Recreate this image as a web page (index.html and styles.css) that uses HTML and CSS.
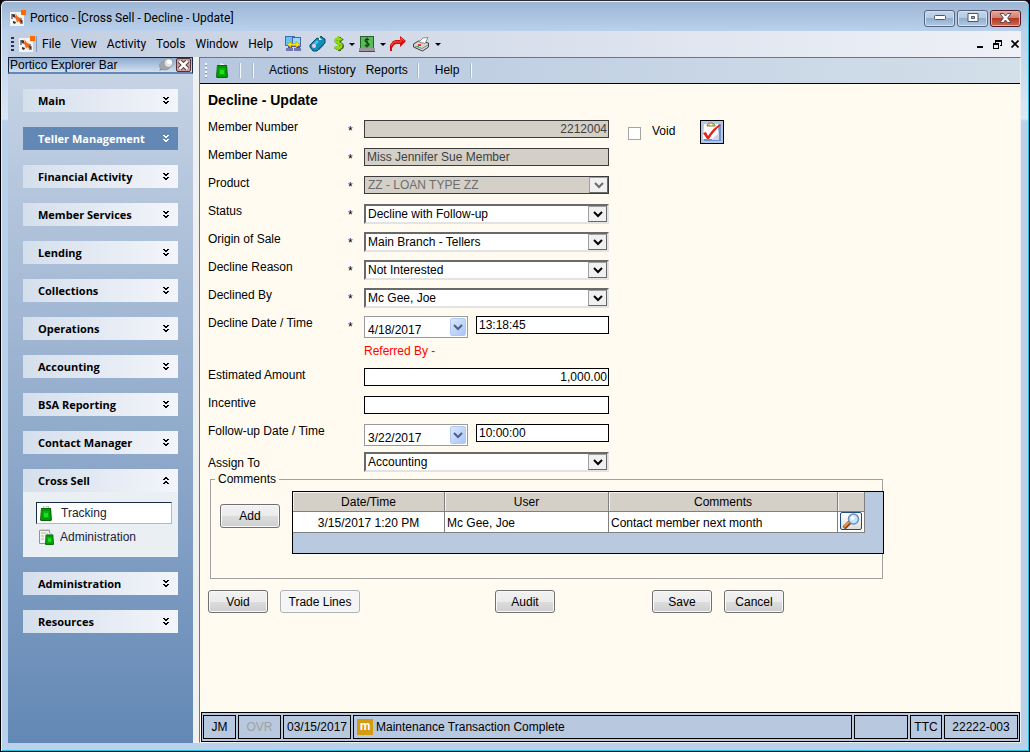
FILE: index.html
```html
<!DOCTYPE html>
<html lang="en">
<head>
    <meta charset="UTF-8">
    <meta name="viewport" content="width=device-width, initial-scale=1.0">
    <title>Portico - [Cross Sell - Decline - Update]</title>
    <link rel="stylesheet" href="styles.css">
</head>
<body>
    <svg class="sprite" aria-hidden="true">
        <symbol id="logo" viewBox="0 0 16 16">
            <rect x="0" y="2" width="14" height="14" fill="#f4f4f2"/>
            <path d="M1 4h4v3H3v2H1zM9 8h3v2h1v4h-3v-2H9z" fill="#8d9093"/>
            <path d="M2 4l3 1 1 3-3-1zM10 9l2 2v2l-3-1zM3 11l3 1-1 2-2-1z" fill="#2a2a2a"/>
            <path d="M5 3l3 4 3 1-1 2 2 4-4-3-1 2-1-4-2-2 2-1z" fill="#f2661a"/>
            <rect x="11" y="0" width="5" height="5" fill="#ff6a00"/>
        </symbol>
        <symbol id="down2" viewBox="0 0 8 8">
            <path d="M1 0h2v1h2V0h2v1H6v1H5v1H3V2H2V1H1zM1 4h2v1h2V4h2v1H6v1H5v1H3V6H2V5H1z" fill="currentColor"/>
        </symbol>
        <symbol id="up2" viewBox="0 0 8 8">
            <path d="M3 0h2v1h1v1h1v1H5V2H3v1H1V2h1V1h1zM3 4h2v1h1v1h1v1H5V6H3v1H1V6h1V5h1z" fill="currentColor"/>
        </symbol>
        <symbol id="chevron" viewBox="0 0 10 7">
            <path d="M1 1l4 4 4-4" fill="none" stroke="currentColor" stroke-width="2"/>
        </symbol>
        <symbol id="bag" viewBox="0 0 12 16">
            <path d="M3 4V1h6v3z" fill="#b9bfc2"/>
            <path d="M4 1l4 1v1H4z" fill="#eef0f1"/>
            <path d="M1 3h10l1 12-1 1H1l-1-1z" fill="#046804"/>
            <path d="M1 4h9l1 11H1z" fill="#009806"/>
            <rect x="3" y="6" width="6" height="7" fill="#06b40a"/>
            <rect x="4" y="8" width="4" height="4" fill="#22de22"/>
        </symbol>
    </svg>

    <div class="window">
        <header class="titlebar">
            <svg class="logo"><use href="#logo"/></svg>
            <span class="title">Portico - [Cross Sell - Decline - Update]</span>
            <button class="win-btn" aria-label="Minimize">
                <svg width="12" height="6"><rect x=".5" y=".5" width="11" height="4" rx="1" fill="#fff" stroke="#4d5669"/></svg>
            </button>
            <button class="win-btn" aria-label="Maximize">
                <svg width="12" height="10"><path d="M1 .5h10v8H1z" fill="#fff" stroke="#4d5669"/><path d="M4.500 3.500h3v2h-3z" fill="#9db8d6" stroke="#4d5669"/></svg>
            </button>
            <button class="win-btn win-close" aria-label="Close">
                <svg width="13" height="10"><path d="M1 .5h3.500l2 2.500 2-2.500H12L8.700 5 12 9.500H8.500l-2-2.500-2 2.500H1L4.300 5z" fill="#fff" stroke="#5b4a57"/></svg>
            </button>
        </header>

        <nav class="menubar">
            <span class="grip"></span>
            <svg class="logo"><use href="#logo"/></svg>
            <span class="logo-line"></span>
            <button class="menu">File</button>
            <button class="menu">View</button>
            <button class="menu">Activity</button>
            <button class="menu">Tools</button>
            <button class="menu">Window</button>
            <button class="menu">Help</button>
            <div class="tools">
                <button class="tool" aria-label="Connect">
                    <svg width="17" height="16" viewBox="0 0 17 16">
                        <rect x=".5" y=".5" width="9" height="9" fill="#62c4f4" stroke="#3b6cb8"/>
                        <rect x="7.500" y="1.500" width="8" height="9" fill="#8fdcfb" stroke="#4b62a8"/>
                        <path d="M1 12h7v3H1zM9 12h7v3H9z" fill="#7277b4"/>
                        <path d="M3 10h4v2H3zM11 10h4v2h-4z" fill="#4c5590"/>
                        <path d="M2 8.500l4-3v2h5v-2l4 3-4 3v-2H6v2z" fill="#ffe11a" stroke="#b99600" stroke-width=".6"/>
                    </svg>
                </button>
                <button class="tool" aria-label="Tag">
                    <svg width="17" height="16" viewBox="0 0 17 16">
                        <path d="M1 9l7-7 2 1 2-3 2 2 2 1v4l-8 8H4l-3-4z" fill="#118fb8" stroke="#0b4460"/>
                        <path d="M3 9l5-5 2 2-6 5z" fill="#49c4e4"/>
                        <path d="M9 13l6-6v2l-5 5z" fill="#0b5f85"/>
                        <path d="M10 1l3 3h-3z" fill="#e9f5fa"/>
                        <circle cx="5" cy="10" r="2" fill="#f3c6ef"/>
                    </svg>
                </button>
                <button class="tool" aria-label="Money">
                    <svg width="11" height="16" viewBox="0 0 11 16">
                        <path d="M9.500 4.500C8 2.500 3 2.500 3 5s6.500 2 6.500 5-5 3.500-7.500 1M6.500 1v14" fill="none" stroke="#46601c" stroke-width="3"/>
                        <path d="M8.500 4C7 2 2.500 2 2.500 4.700s6 2 6 4.800-5 3.500-7 1M5.500 0v14" fill="none" stroke="#8fdc12" stroke-width="2.200"/>
                    </svg>
                    <i class="arrow"></i>
                </button>
                <button class="tool" aria-label="Teller cash">
                    <svg width="16" height="16" viewBox="0 0 16 16">
                        <rect x="1.500" y=".5" width="13" height="12" fill="#58bb58" stroke="#27602c"/>
                        <path d="M10 4C9 2.600 6 2.800 6.100 4.600S10 6.500 10 8.400s-3.200 2.200-4.200.6M8 1.500v10" fill="none" stroke="#123c16" stroke-width="1.200"/>
                        <path d="M0 12h16v3H0z" fill="#9a9a9a"/><path d="M0 15h16v1H0z" fill="#4c4c4c"/>
                    </svg>
                    <i class="arrow"></i>
                </button>
                <button class="tool" aria-label="Forward">
                    <svg width="16" height="16" viewBox="0 0 16 16">
                        <path d="M0 15V9l3-4 3-1h4V0l6 5-6 6V8H6L4 9l-2 3v3z" fill="#d40a0a"/>
                        <path d="M1 10l3-4h7V2l3 3" fill="none" stroke="#f75a4a"/>
                    </svg>
                </button>
                <button class="tool" aria-label="Print">
                    <svg width="17" height="15" viewBox="0 0 17 15">
                        <path d="M.5 7l5-3 10 2v4l-6 4-9-4z" fill="#d6d6d2" stroke="#3f3f3f"/>
                        <path d="M6 5l4-4 5-.5-3 6z" fill="#fff" stroke="#8c8c8c"/>
                        <path d="M2 9l7 2.500 6-3.500" fill="none" stroke="#8a8a8a"/>
                        <rect x="5" y="7" width="3" height="2" fill="#e23c2d"/><rect x="4" y="9" width="2" height="1" fill="#39a53a"/>
                    </svg>
                    <i class="arrow"></i>
                </button>
            </div>
            <div class="mdi">
                <button class="mdi-btn" aria-label="Minimize form"><svg width="8" height="8"><path d="M1 6h6v2H1z"/></svg></button>
                <button class="mdi-btn" aria-label="Restore form"><svg width="9" height="9"><path d="M2 0h7v6H7V5h1V2H3v1H2zM0 3h6v6H0zm1 2v3h4V5z" fill-rule="evenodd"/></svg></button>
                <button class="mdi-btn" aria-label="Close form"><svg width="8" height="8"><path d="M.5.5l7 7M7.500.5l-7 7" stroke="#000" stroke-width="1.700"/></svg></button>
            </div>
        </nav>

        <div class="workspace">
            <aside class="explorer">
                <div class="explorer-head">
                    <span class="explorer-title">Portico Explorer Bar</span>
                    <button class="pin" aria-label="Pin">
                        <svg width="15" height="14" viewBox="0 0 15 14">
                            <path d="M0 13l4-6 3 3z" fill="#7e858c"/>
                            <ellipse cx="6" cy="7.500" rx="5.500" ry="4.500" fill="#a1a7ad" stroke="#858c93" stroke-width=".7"/>
                            <circle cx="9.500" cy="5" r="4.500" fill="#dfe2e4" stroke="#858c93" stroke-width=".8"/>
                            <ellipse cx="10.500" cy="4" rx="2.500" ry="2.300" fill="#fff"/>
                        </svg>
                    </button>
                    <button class="bar-close" aria-label="Close bar">
                        <svg width="11" height="10"><path d="M1.500 1l8 8M9.500 1l-8 8" stroke="#4d3338" stroke-width="4.500"/><path d="M1.500 1l8 8M9.500 1l-8 8" stroke="#fff" stroke-width="2.500"/></svg>
                    </button>
                </div>
                <div class="groups">
                    <button class="group">Main<svg><use href="#down2"/></svg></button>
                    <button class="group active">Teller Management<svg><use href="#down2"/></svg></button>
                    <button class="group">Financial Activity<svg><use href="#down2"/></svg></button>
                    <button class="group">Member Services<svg><use href="#down2"/></svg></button>
                    <button class="group">Lending<svg><use href="#down2"/></svg></button>
                    <button class="group">Collections<svg><use href="#down2"/></svg></button>
                    <button class="group">Operations<svg><use href="#down2"/></svg></button>
                    <button class="group">Accounting<svg><use href="#down2"/></svg></button>
                    <button class="group">BSA Reporting<svg><use href="#down2"/></svg></button>
                    <button class="group">Contact Manager<svg><use href="#down2"/></svg></button>
                    <div>
                        <button class="group">Cross Sell<svg><use href="#up2"/></svg></button>
                        <div class="group-body">
                            <a class="item selected" href="#"><svg width="12" height="16"><use href="#bag"/></svg>Tracking</a>
                            <a class="item" href="#">
                                <svg width="15" height="16" viewBox="0 0 15 16">
                                    <path d="M.5 1.500h10v13H.5z" fill="#eef4fa" stroke="#7f97b2"/>
                                    <path d="M1 1h10M2 4h5M2 7h3M2 10h3" stroke="#c9b27a"/>
                                    <svg x="6" y="3" width="9" height="13" viewBox="0 0 12 16" preserveAspectRatio="none"><use href="#bag" width="12" height="16"/></svg>
                                </svg>Administration</a>
                        </div>
                    </div>
                    <button class="group">Administration<svg><use href="#down2"/></svg></button>
                    <button class="group">Resources<svg><use href="#down2"/></svg></button>
                </div>
            </aside>

            <main class="form-window">
                <nav class="form-tools">
                    <span class="grip light"></span>
                    <button class="bag-btn" aria-label="Cross Sell"><svg width="12" height="16"><use href="#bag"/></svg></button>
                    <span class="sep"></span>
                    <span class="sep"></span>
                    <button class="form-menu first">Actions</button>
                    <button class="form-menu">History</button>
                    <button class="form-menu">Reports</button>
                    <span class="sep"></span>
                    <button class="form-menu help">Help</button>
                    <span class="sep"></span>
                </nav>

                <form class="content">
                    <h1>Decline - Update</h1>

                    <div class="row">
                        <label class="label" for="memberNumber">Member Number</label><span class="req">*</span>
                        <input class="text wide number" id="memberNumber" type="text" value="2212004" disabled>
                        <div class="void-box">
                            <input class="check" type="checkbox" id="void">
                            <label class="void-label" for="void">Void</label>
                            <button type="button" class="clip-btn" aria-label="Checklist">
                                <svg width="20" height="20" viewBox="0 0 20 20">
                                    <rect x="2" y="3" width="17" height="16" fill="#6f94cc"/>
                                    <path d="M2 2h14l1 15H1z" fill="#fdfdff"/>
                                    <path d="M10 17l7-6v7h-7z" fill="#c9d8ef"/>
                                    <path d="M5 4c0-4 8-4 8 0z" fill="#e3cf80" stroke="#877534"/>
                                    <circle cx="9" cy="2.500" r="1" fill="#fff8d4"/>
                                    <path d="M1 11l3-1 2 4c3-5 7-9 12-12l1 1C14 7 10 12 7 17H5z" fill="#e02818"/>
                                </svg>
                            </button>
                        </div>
                    </div>
                    <div class="row">
                        <label class="label" for="memberName">Member Name</label><span class="req">*</span>
                        <input class="text wide" id="memberName" type="text" value="Miss Jennifer Sue Member" disabled>
                    </div>
                    <div class="row">
                        <label class="label" for="product">Product</label><span class="req">*</span>
                        <div class="drop off">
                            <select id="product" disabled><option>ZZ - LOAN TYPE ZZ</option></select>
                            <span class="drop-arrow"><svg width="10" height="7"><use href="#chevron"/></svg></span>
                        </div>
                    </div>
                    <div class="row">
                        <label class="label" for="status">Status</label><span class="req">*</span>
                        <div class="drop">
                            <select id="status"><option>Decline with Follow-up</option></select>
                            <span class="drop-arrow"><svg width="10" height="7"><use href="#chevron"/></svg></span>
                        </div>
                    </div>
                    <div class="row">
                        <label class="label" for="origin">Origin of Sale</label><span class="req">*</span>
                        <div class="drop">
                            <select id="origin"><option>Main Branch - Tellers</option></select>
                            <span class="drop-arrow"><svg width="10" height="7"><use href="#chevron"/></svg></span>
                        </div>
                    </div>
                    <div class="row">
                        <label class="label" for="reason">Decline Reason</label><span class="req">*</span>
                        <div class="drop">
                            <select id="reason"><option>Not Interested</option></select>
                            <span class="drop-arrow"><svg width="10" height="7"><use href="#chevron"/></svg></span>
                        </div>
                    </div>
                    <div class="row">
                        <label class="label" for="declinedBy">Declined By</label><span class="req">*</span>
                        <div class="drop">
                            <select id="declinedBy"><option>Mc Gee, Joe</option></select>
                            <span class="drop-arrow"><svg width="10" height="7"><use href="#chevron"/></svg></span>
                        </div>
                    </div>
                    <div class="row">
                        <label class="label" for="declineDate">Decline Date / Time</label><span class="req">*</span>
                        <div class="date">
                            <input id="declineDate" type="text" value="4/18/2017">
                            <button type="button" class="date-btn" aria-label="Pick decline date"><svg width="10" height="7"><use href="#chevron"/></svg></button>
                        </div>
                        <input class="text time" type="text" value="13:18:45" aria-label="Decline time">
                    </div>
                    <p class="referred">Referred By -</p>
                    <div class="row">
                        <label class="label" for="amount">Estimated Amount</label><span class="req"></span>
                        <input class="text wide number" id="amount" type="text" value="1,000.00">
                    </div>
                    <div class="row">
                        <label class="label" for="incentive">Incentive</label><span class="req"></span>
                        <input class="text wide" id="incentive" type="text">
                    </div>
                    <div class="row">
                        <label class="label" for="followDate">Follow-up Date / Time</label><span class="req"></span>
                        <div class="date">
                            <input id="followDate" type="text" value="3/22/2017">
                            <button type="button" class="date-btn" aria-label="Pick follow-up date"><svg width="10" height="7"><use href="#chevron"/></svg></button>
                        </div>
                        <input class="text time" type="text" value="10:00:00" aria-label="Follow-up time">
                    </div>
                    <div class="row assign">
                        <label class="label" for="assign">Assign To</label><span class="req"></span>
                        <div class="drop">
                            <select id="assign"><option>Accounting</option></select>
                            <span class="drop-arrow"><svg width="10" height="7"><use href="#chevron"/></svg></span>
                        </div>
                    </div>

                    <fieldset class="comments">
                        <legend>Comments</legend>
                        <div class="comments-inner">
                            <button type="button" class="btn add">Add</button>
                            <div class="grid-box">
                                <table>
                                    <thead>
                                        <tr><th class="c-date">Date/Time</th><th class="c-user">User</th><th class="c-text">Comments</th><th class="c-view"></th></tr>
                                    </thead>
                                    <tbody>
                                        <tr>
                                            <td class="center">3/15/2017 1:20 PM</td>
                                            <td>Mc Gee, Joe</td>
                                            <td>Contact member next month</td>
                                            <td class="view-cell">
                                                <button type="button" class="view-btn" aria-label="View comment">
                                                    <svg width="18" height="16" viewBox="0 0 18 16">
                                                        <path d="M2 15l6-6" stroke="#6b3d1e" stroke-width="4"/>
                                                        <path d="M2 14l5-5" stroke="#f08c3a" stroke-width="2.500"/>
                                                        <circle cx="11.500" cy="6" r="5" fill="#c4e6fb" stroke="#6f8fb5" stroke-width="1.500"/>
                                                        <circle cx="10.500" cy="5" r="2" fill="#fff"/>
                                                    </svg>
                                                </button>
                                            </td>
                                        </tr>
                                    </tbody>
                                </table>
                            </div>
                        </div>
                    </fieldset>

                    <div class="actions">
                        <button type="button" class="btn">Void</button>
                        <button type="button" class="btn flat">Trade Lines</button>
                        <button type="button" class="btn audit">Audit</button>
                        <button type="button" class="btn save">Save</button>
                        <button type="button" class="btn">Cancel</button>
                    </div>
                </form>

                <footer class="statusbar">
                    <span class="cell initials">JM</span>
                    <span class="cell ovr">OVR</span>
                    <span class="cell today">03/15/2017</span>
                    <span class="cell message"><b class="m-icon">m</b>Maintenance Transaction Complete</span>
                    <span class="cell blank"></span>
                    <span class="cell ttc">TTC</span>
                    <span class="cell branch">22222-003</span>
                </footer>
            </main>
        </div>
    </div>
</body>
</html>
```

FILE: styles.css
```css
* {
    box-sizing: border-box;
}
body {
    margin: 0;
    background: #000;
    font-family: "Liberation Sans", Arial, sans-serif;
    font-size: 12px;
    line-height: 14px;
    color: #000;
}
button, input, select {
    font: inherit;
    color: inherit;
    margin: 0;
    padding: 0;
}
button {
    background: none;
    border: 0;
}
svg {
    display: block;
    flex: none;
}
.sprite {
    position: absolute;
    width: 0;
    height: 0;
}

/* window frame */
.window {
    display: flex;
    flex-direction: column;
    min-height: 100vh;
    border: 1px solid #000;
    border-top-color: #2c2a33;
    border-radius: 6px 6px 0 0;
    padding: 0 8px 8px 7px;
    background: linear-gradient(#9cb5d3, #b9d1ec 30px, #dce8f5 118px, #b9d1ea 120px);
    box-shadow: inset 0 1px #eaf3fb, inset 1px 0 #e4f0fa, inset -1px -1px #25c3dc;
}
.titlebar {
    display: flex;
    align-items: center;
    height: 30px;
    padding: 4px 0 0 2px;
    font-family: Roboto, "Noto Sans", sans-serif;
}
.logo {
    width: 16px;
    height: 16px;
}
.title {
    flex: 1;
    padding-left: 4px;
}
.win-btn {
    display: flex;
    align-items: center;
    justify-content: center;
    width: 31px;
    height: 17px;
    margin-left: 2px;
    border: 1px solid #56657e;
    border-radius: 3px;
    background: linear-gradient(#c4d6ea, #b3cae2 50%, #93aecb 50%, #b0cbe6);
    box-shadow: inset 0 0 0 1px #d3e2f1;
}
.win-close {
    border-color: #4c1624;
    background: linear-gradient(#e3a99c, #d0796a 50%, #b13a25 50%, #cf6b4d);
    box-shadow: inset 0 0 0 1px #e7b3a6;
}

/* main menu */
.menubar {
    display: flex;
    align-items: center;
    height: 26px;
    padding: 0 2px;
    background: linear-gradient(90deg, #c1cde0, #eff1f7);
    font-family: Roboto, "Noto Sans", sans-serif;
}
.grip {
    width: 3px;
    height: 15px;
    margin: 0 5px 0 1px;
    background: repeating-linear-gradient(#1e3564 0 2px, transparent 2px 4px);
}
.grip.light {
    width: 2px;
    background: repeating-linear-gradient(#f4f7fb 0 2px, #8b9bb2 2px 3px, transparent 3px 4px);
}
.logo-line {
    width: 1px;
    height: 16px;
    margin-left: 1px;
    background: #7c9cc8;
}
.menu {
    padding: 0 5px;
}
.tools {
    display: flex;
    align-items: center;
    gap: 7px;
    margin-left: 7px;
}
.tool {
    display: flex;
    align-items: center;
    gap: 5px;
}
.arrow {
    margin-right: -3px;
    border: 3px solid transparent;
    border-top-color: #000;
    border-bottom: 0;
}
.mdi {
    display: flex;
    gap: 9px;
    margin-left: auto;
}

.workspace {
    flex: 1;
    display: flex;
    background: #f0f0f0;
}

/* explorer bar */
.explorer {
    display: flex;
    flex-direction: column;
    width: 185px;
    flex: none;
}
.explorer-head {
    display: flex;
    align-items: center;
    height: 17px;
    padding: 0 1px;
    border: 1px solid #1c2b45;
    border-bottom: 2px solid #6288b6;
    background: linear-gradient(#8eabd0, #d3dfee);
}
.explorer-title {
    flex: 1;
}
.pin {
    margin-right: 2px;
}
.bar-close {
    display: flex;
    align-items: center;
    justify-content: center;
    width: 15px;
    height: 14px;
    border: 1px solid #4d3338;
    border-radius: 2px;
    background: #d39a97;
}
.groups {
    flex: 1;
    display: flex;
    flex-direction: column;
    gap: 15px;
    padding: 15px;
    background: linear-gradient(#c6d3e5, #6388b5);
}
.group {
    display: flex;
    align-items: center;
    justify-content: space-between;
    width: 100%;
    height: 23px;
    padding: 0 8px 0 15px;
    background: linear-gradient(90deg, #d5dfec, #f3f5fa);
    font-family: "Open Sans", "Noto Sans", sans-serif;
    font-size: 11px;
    font-weight: bold;
}
.group svg {
    width: 8px;
    height: 8px;
}
.group.active {
    background: #6388b6;
    color: #fff;
}
.group-body {
    padding: 10px 6px 9px 13px;
    background: #eaeff4;
}
.item {
    display: flex;
    align-items: center;
    gap: 6px;
    height: 22px;
    padding: 0 3px;
    color: #20203a;
    text-decoration: none;
}
.item + .item {
    margin-top: 2px;
}
.item.selected {
    gap: 9px;
    border: 1px solid #a9bcd6;
    border-top-color: #1c2b45;
    border-left-color: #1c2b45;
    background: #fff;
}

/* form window */
.form-window {
    flex: 1;
    display: flex;
    flex-direction: column;
    min-width: 0;
    margin-left: 6px;
    border: 1px solid #f0f0f0;
    border-top-color: #757575;
    border-left: 1px solid #757575;
    background: #fffbf0;
}
.form-tools {
    display: flex;
    align-items: center;
    height: 26px;
    padding: 0 0 1px 4px;
    border-bottom: 1px solid #000;
    background: linear-gradient(90deg, #b6c7df, #d3dfe9);
}
.bag-btn {
    margin: 0 12px 0 4px;
}
.sep {
    width: 1px;
    height: 15px;
    margin-right: 12px;
    background: #f6f8fb;
    box-shadow: -1px 0 #a9b6ca;
}
.form-menu {
    margin-right: 10px;
}
.form-menu.first {
    margin-left: 3px;
}
.form-menu.help {
    margin: 0 12px 0 4px;
}

.content {
    flex: 1;
    padding: 9px 8px;
}
h1 {
    margin: 0 0 12px;
    font-size: 14px;
    line-height: 15px;
}
.row {
    display: flex;
    align-items: flex-start;
    height: 28px;
}
.label {
    width: 140px;
}
.req {
    width: 16px;
    padding-top: 4px;
}
.text {
    height: 18px;
    padding: 0 2px;
    border: 1px solid #000;
    background: #fff;
}
.text:disabled {
    border-color: #3c3c3c;
    background: #d4d0c8;
    color: #404040;
}
.wide {
    width: 245px;
}
.number {
    padding: 0 1px;
    text-align: right;
}
.time {
    width: 133px;
    margin-left: 8px;
}
.void-box {
    display: flex;
    align-items: center;
    height: 24px;
    margin-left: 19px;
}
.check {
    appearance: none;
    width: 13px;
    height: 13px;
    margin: 2px 11px 0 0;
    border: 1px solid #a5a5a5;
    background: #fff;
}
.void-label {
    padding-bottom: 2px;
}
.clip-btn {
    display: flex;
    align-items: center;
    justify-content: center;
    width: 24px;
    height: 24px;
    margin-left: 25px;
    border: 1px solid #000;
    background: #b4c7e2;
}

.drop {
    position: relative;
    width: 245px;
    height: 20px;
    border: 2px solid #696969;
    border-right-color: #e3e3e3;
    border-bottom-color: #e3e3e3;
    background: #fff;
}
.drop select {
    appearance: none;
    display: block;
    width: 100%;
    height: 100%;
    padding: 0 20px 0 2px;
    border: 0;
    background: transparent;
    opacity: 1;
}
.drop-arrow {
    position: absolute;
    top: 0;
    right: 0;
    display: flex;
    align-items: center;
    justify-content: center;
    width: 19px;
    height: 16px;
    border: 1px solid #a0a0a0;
    border-right-color: #696969;
    border-bottom-color: #696969;
    background: #f0f0f0;
    pointer-events: none;
}
.drop.off {
    height: 18px;
    border: 1px solid #3c3c3c;
    background: #d4d0c8;
    color: #6d6d6d;
}
.drop.off select {
    padding-left: 3px;
}

.date {
    display: flex;
    width: 104px;
    height: 22px;
    padding: 1px;
    border: 1px solid #9a9a9a;
    background: #fff;
}
.date input {
    flex: 1;
    min-width: 0;
    padding: 5px 0 0 2px;
    border: 0;
    background: none;
}
.date-btn {
    display: flex;
    align-items: center;
    justify-content: center;
    width: 16px;
    border: 1px solid #b3c8f3;
    border-radius: 2px;
    background: linear-gradient(135deg, #dbe6fd, #aac5f9);
    color: #4d6185;
}
.referred {
    height: 24px;
    margin: 0;
    padding-left: 156px;
    color: #f00;
}
.assign {
    height: 20px;
}
.assign .label {
    padding-top: 4px;
}

.comments {
    width: 673px;
    height: 107px;
    margin: 0 0 0 2px;
    padding: 0;
    border: 1px solid #a0a0a0;
}
.comments legend {
    margin-left: 4px;
    padding: 0 3px;
}
.comments-inner {
    display: flex;
    align-items: flex-start;
    gap: 12px;
    margin: 5px -2px 0 9px;
}
.grid-box {
    flex: 1;
    height: 63px;
    border: 1px solid #000;
    background: #b8c9e0;
}
table {
    border-collapse: separate;
    border-spacing: 0;
    table-layout: fixed;
    width: 572px;
}
th, td {
    height: 21px;
    padding: 1px 2px 0;
    border-right: 1px solid #808080;
    border-bottom: 1px solid #808080;
    background: #fff;
    text-align: left;
}
th {
    height: 20px;
    background: #d4d0c8;
    font-weight: normal;
    text-align: center;
    box-shadow: inset 1px 1px #f4f2ee;
}
.c-date {
    width: 152px;
}
.c-user {
    width: 164px;
}
.c-text {
    width: 229px;
}
.center {
    text-align: center;
}
.view-cell {
    padding-top: 0;
    vertical-align: top;
}
.view-btn {
    display: flex;
    align-items: center;
    justify-content: center;
    width: 22px;
    height: 18px;
    border: 1px solid #1f4a86;
    border-radius: 2px;
    background: linear-gradient(#fff, #dcdcdc);
}

.btn {
    width: 60px;
    height: 23px;
    border: 1px solid #707070;
    border-radius: 3px;
    background: linear-gradient(#f2f2f2, #ebebeb 50%, #dddddd 50%, #cfcfcf);
    box-shadow: inset 0 0 0 1px #f8f8f8;
}
.btn.add {
    height: 24px;
    margin-top: 13px;
}
.btn.flat {
    width: 80px;
    border-color: #adb2b5;
    background: #f4f4f4;
}
.actions {
    display: flex;
    gap: 12px;
    margin-top: 11px;
}
.btn.audit {
    margin-left: 123px;
}
.btn.save {
    margin-left: 85px;
}

/* status bar */
.statusbar {
    display: flex;
    gap: 2px;
    height: 30px;
    margin-left: 1px;
    padding: 2px 1px;
    border: 1px solid #000;
    background: #b8c9df;
}
.cell {
    display: flex;
    align-items: center;
    justify-content: center;
    border: 1px solid #000;
}
.initials {
    width: 33px;
}
.ovr {
    width: 43px;
    color: #a0a0a0;
}
.today {
    width: 68px;
}
.message {
    flex: 1;
    justify-content: flex-start;
    gap: 3px;
    padding-left: 3px;
}
.m-icon {
    width: 16px;
    height: 16px;
    background: #d39b12;
    color: #fff;
    text-align: center;
}
.blank {
    width: 54px;
}
.ttc {
    width: 32px;
}
.branch {
    width: 74px;
}
```
